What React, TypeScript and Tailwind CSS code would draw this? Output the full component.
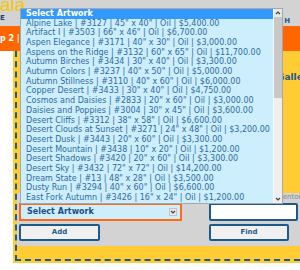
const artworks = [
  'Alpine Lake | #3127 | 45" x 40" | Oil | $5,400.00',
  'Artifact I | #3503 | 66" x 46" | Oil | $6,700.00',
  'Aspen Elegance | #3171 | 40" x 30" | Oil | $3,000.00',
  'Aspens on the Ridge | #3132 | 60" x 65" | Oil | $11,700.00',
  'Autumn Birches | #3434 | 30" x 40" | Oil | $3,300.00',
  'Autumn Colors | #3237 | 40" x 50" | Oil | $5,000.00',
  'Autumn Stillness | #3110 | 40" x 60" | Oil | $6,000.00',
  'Copper Desert | #3433 | 30" x 40" | Oil | $4,750.00',
  'Cosmos and Daisies | #2833 | 20" x 60" | Oil | $3,000.00',
  'Daisies and Poppies | #3004 | 30" x 45" | Oil | $3,600.00',
  'Desert Cliffs | #3312 | 38" x 58" | Oil | $6,600.00',
  'Desert Clouds at Sunset | #3271 | 24" x 48" | Oil | $3,200.00',
  'Desert Dusk | #3443 | 20" x 60" | Oil | $3,300.00',
  'Desert Mountain | #3438 | 10" x 20" | Oil | $1,200.00',
  'Desert Shadows | #3420 | 20" x 60" | Oil | $3,300.00',
  'Desert Sky | #3432 | 72" x 72" | Oil | $14,200.00',
  'Dream State | #13 | 48" x 28" | Oil | $3,500.00',
  'Dusty Run | #3294 | 40" x 60" | Oil | $6,600.00',
  'East Fork Autumn | #3426 | 16" x 24" | Oil | $1,200.00',
];

function Chevron({ up }: { up?: boolean }) {
  return (
    <svg width="6" height="4" viewBox="0 0 6 4">
      <path
        d={up ? 'M1 3 L3 1 L5 3' : 'M1 1 L3 3 L5 1'}
        fill="none"
        stroke="#404040"
        strokeWidth="1.2"
      />
    </svg>
  );
}

export default function App() {
  return (
    <div className="relative w-[300px] h-[270px] overflow-hidden bg-white font-['DejaVu_Sans',sans-serif]">
      {/* top bar */}
      <div className="h-[26px] bg-[#d3d3d3] flex justify-between">
        <div className="flex flex-col">
          <span className="text-[19px] leading-[14px] h-[14px] text-[#f7c600] font-['Liberation_Sans',sans-serif] -mt-[2px]">
            ala
          </span>
          <span className="mt-[3px] text-[7px] font-bold text-[#1c3f6e] leading-none">E</span>
        </div>
        <span className="mt-[18px] mr-[10px] text-[7px] font-bold text-[#1c5a8e] leading-none">H</span>
      </div>

      {/* orange nav */}
      <div className="h-[25px] bg-[#ff6600] flex items-center">
        <span className="text-[8px] font-bold text-white leading-none">p 2 |</span>
      </div>

      {/* yellow panel */}
      <div className="flex">
        <div className="w-[13px] h-[212px] bg-white" />
        <div className="w-[287px] h-[212px] bg-[#ffcc33]">
          <div className="ml-[2px] h-[210px] border-l-2 border-b-2 border-dashed border-[#1d5a96] flex flex-col">
            <div className="mt-[22px] ml-[260px] whitespace-nowrap text-[9px] font-bold text-[#1d5a96] leading-none">
              Gallery
            </div>
            <div className="mt-[111px] h-[53px] bg-[#d3d3d3] flex flex-col">
              <div className="ml-[255px] mt-[1px] whitespace-nowrap text-[7px] text-[#8a8a8a] leading-none">
                Inventory
              </div>
              <div className="mt-[2px] flex items-start">
                <div className="ml-[2px] w-[163px] h-[18px] border-2 border-[#ff6a13] bg-[#cdeefd] flex items-center justify-between pl-[6px] pr-[3px]">
                  <span className="text-[8px] font-bold text-[#1d4f80] leading-none">Select Artwork</span>
                  <span className="w-[8px] h-[8px] bg-[#e8e8e8] border border-[#c4c4c4] flex items-center justify-center">
                    <Chevron />
                  </span>
                </div>
                <div className="ml-[27px] w-[89px] h-[18px] bg-white border-2 border-[#1d5a8a] rounded-[2px]" />
              </div>
              <div className="mt-[3px] flex">
                <button className="ml-[2px] w-[81px] h-[17px] bg-[#f0f0f0] border-2 border-[#1d5a8a] rounded-[2px] text-[7px] font-bold text-[#1d5a8a] leading-none">
                  Add
                </button>
                <button className="ml-[109px] w-[80px] h-[17px] bg-[#f0f0f0] border-2 border-[#1d5a8a] rounded-[2px] text-[7px] font-bold text-[#1d5a8a] leading-none">
                  Find
                </button>
              </div>
            </div>
          </div>
        </div>
      </div>

      {/* open select popup */}
      <div className="absolute left-[20px] top-[8px] w-[263px] h-[196px] border border-[#a8a8a8] bg-[#cdeefd] flex">
        <div className="flex-1 flex flex-col overflow-hidden">
          <div className="h-[9.7px] bg-[#3399ff] flex items-center pl-[5px]">
            <span className="text-[8px] font-bold text-white leading-none">Select Artwork</span>
          </div>
          {artworks.map((a) => (
            <div key={a} className="h-[9.72px] flex items-center pl-[5px] whitespace-nowrap">
              <span className="text-[8px] text-[#2f6c9c] leading-none">{a}</span>
            </div>
          ))}
        </div>
        <div className="w-[9px] border-l border-[#f8f8f8] bg-[#efefef] flex flex-col">
          <div className="h-[8px] flex items-center justify-center bg-[#e8e8e8]">
            <Chevron up />
          </div>
          <div className="h-[81px] bg-[#c8c8c8]" />
          <div className="flex-1" />
          <div className="h-[8px] flex items-center justify-center">
            <Chevron />
          </div>
        </div>
      </div>
    </div>
  );
}
